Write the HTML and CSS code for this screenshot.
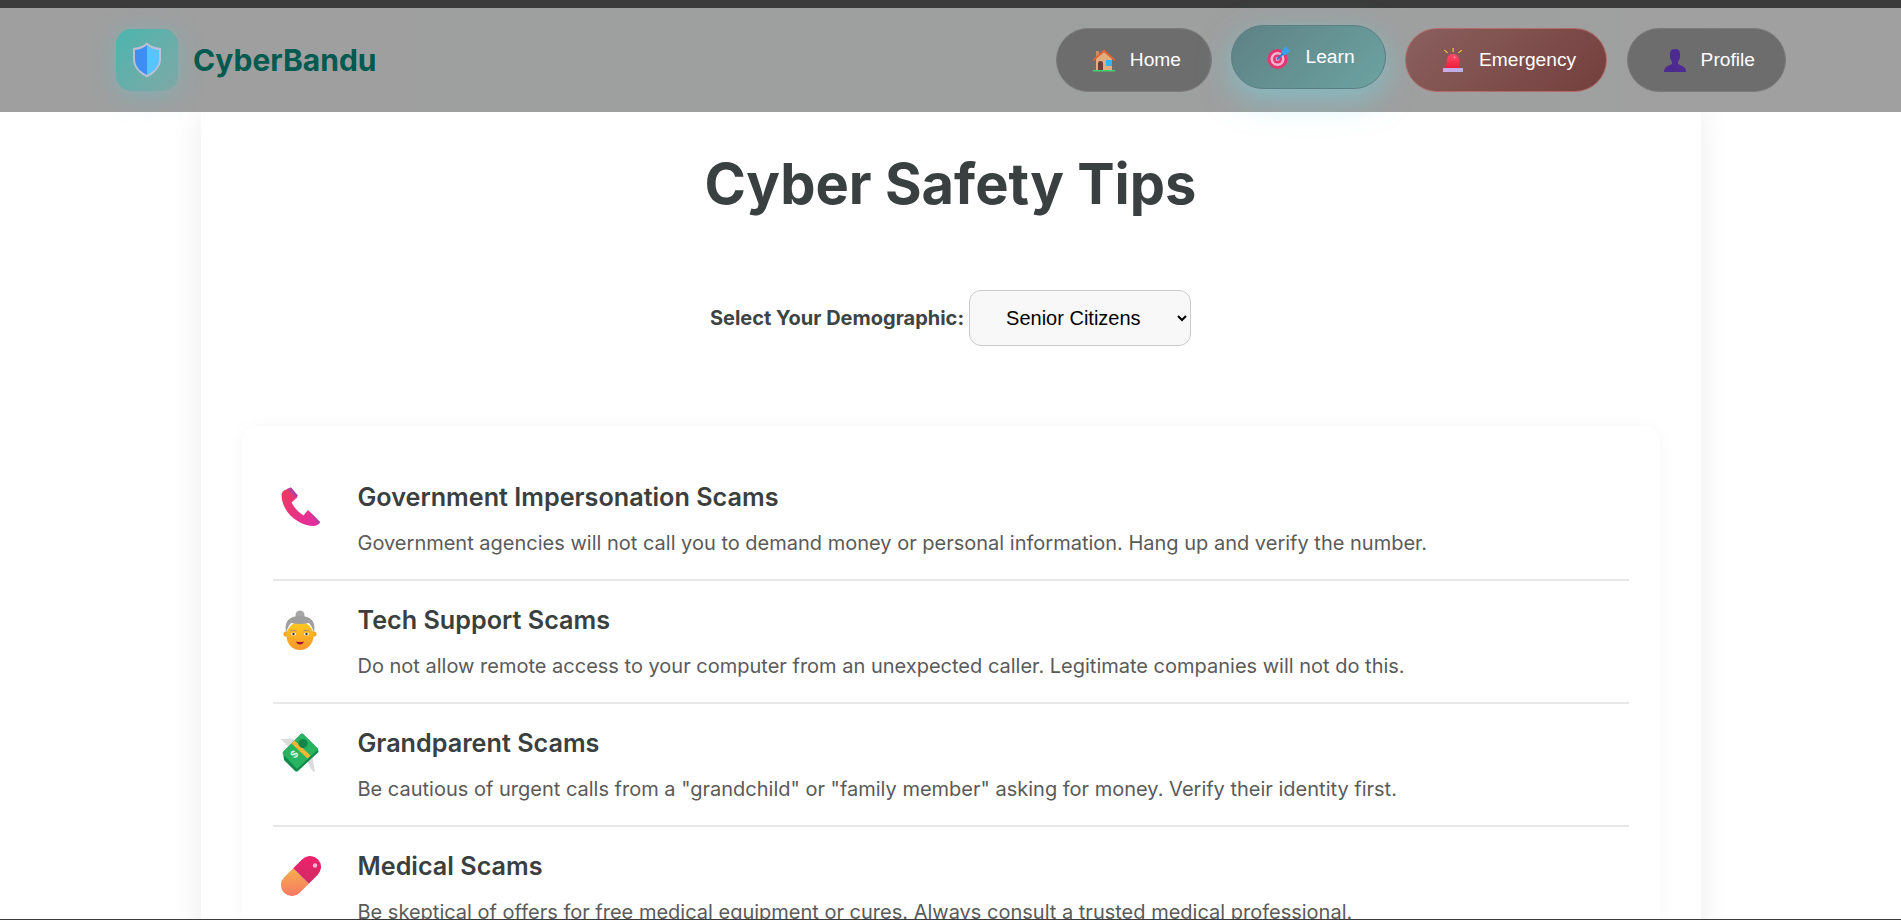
FILE: index.html
```html
<!DOCTYPE html>
<html lang="en">
<head>
<meta charset="utf-8">
<title>CyberBandu</title>
<link rel="stylesheet" href="styles.css">
</head>
<body>
<div class="topbar"></div>
<nav class="nav">
  <a class="brand">
    <span class="logo">
      <svg class="shield" viewBox="0 0 30 36"><path d="M15 .5l4 3q5 2 10 2.500V17c0 9-7.500 15-14 18.500C8.500 32 1 26 1 17V6q5-.5 10-2.500z" fill="#bcc0d6"/><path d="M15 3v30C9 30 3 25 3 17V8q7-.5 12-5z" fill="#3d8df3"/><path d="M15 3v30c6-3 12-8 12-16V8q-7-.5-12-5z" fill="#55c4ff"/></svg>
    </span>
    <span class="brand-name">CyberBandu</span>
  </a>
  <div class="links">
    <a class="link">
      <svg class="nav-icon" viewBox="0 0 24 24"><path d="M4 3h3v7H4z" fill="#c98d63"/><path d="M4 11L12 4l8 7v11H4z" fill="#e3ae7d"/><path d="M.5 12L12 1.500 23.500 12l-1 1L12 4 1.500 13z" fill="#f2602e"/><path d="M6 22v-7q0-2 2.500-2t2.500 2v7z" fill="#6e3f3c"/><path d="M14 12h6v6h-6z" fill="#35b4f4"/><path d="M1 22h22v1.500H1z" fill="#3fd56a"/></svg>
      <span>Home</span>
    </a>
    <a class="link link-active">
      <svg class="nav-icon" viewBox="0 0 24 24"><circle cx="10.500" cy="14" r="10" fill="#e2376f"/><circle cx="10.500" cy="14" r="7" fill="#f3b3d2"/><circle cx="10.500" cy="14" r="4.500" fill="#e2376f"/><circle cx="10.500" cy="14" r="2" fill="#f3b3d2"/><path d="M10 14.500l8-8" stroke="#1f7fd6" stroke-width="2"/><path d="M14 7l5-6 1.500 3 3.500 1-6 5.500z" fill="#3aa0f0"/></svg>
      <span>Learn</span>
    </a>
    <a class="link link-danger">
      <svg class="nav-icon" viewBox="0 0 20 24"><defs><linearGradient id="sr" x1="0" y1="0" x2="0" y2="1"><stop offset="0" stop-color="#ff4a6a"/><stop offset="1" stop-color="#ee1f3c"/></linearGradient></defs><path d="M3 20l1-9q1-5 6-5t6 5l1 9z" fill="url(#sr)"/><circle cx="11.500" cy="9.500" r="1" fill="#ffa0ae"/><path d="M0 20h20v4H0z" fill="#c6ade6"/><path d="M9.500 0h1.200v4H9.500zM1 2.500l.8-.8L5 4.500l-.8.8zM19.200 2.500l-.8-.8L15 4.500l.8.8z" fill="#f3c43c"/></svg>
      <span>Emergency</span>
    </a>
    <a class="link">
      <svg class="nav-icon" viewBox="0 0 24 24"><path d="M7 6q0-5 5-5t5 5v3q0 1-.5 2t-1.500 3v2q5 2 7 4 1 2 1 4H1q0-2 1-4 2-2 7-4v-2q-1-2-1.500-3T7 9z" fill="#4c2a8f"/></svg>
      <span>Profile</span>
    </a>
  </div>
</nav>
<main class="main">
  <div class="container">
    <h1 class="title">Cyber Safety Tips</h1>
    <div class="picker">
      <label class="picker-label" for="demo">Select Your Demographic:</label>
      <select class="picker-select" id="demo">
        <option>Senior Citizens</option>
      </select>
    </div>
    <section class="card">
      <article class="tip">
        <svg class="tip-icon" viewBox="0 0 40 40"><defs><linearGradient id="ph" x1="0" y1="0" x2="1" y2="1"><stop offset="0" stop-color="#ee3a5a"/><stop offset="1" stop-color="#e22ca8"/></linearGradient></defs><path d="M6 2l4-1.500L16.500 10l-6 5.500Q14 23 22.500 28.500L27 23l12 12q-1 3-6 4C18 39 1 26 .5 8Q.5 4 6 2z" fill="url(#ph)"/><path d="M6.500 2L10 .5l7 8-2 2.500zM28.500 24.500L27 23l12 12-1.500 2.500z" fill="#b340a0"/></svg>
        <div class="tip-body">
          <h3 class="tip-title">Government Impersonation Scams</h3>
          <p class="tip-text">Government agencies will not call you to demand money or personal information. Hang up and verify the number.</p>
        </div>
      </article>
      <article class="tip">
        <svg class="tip-icon" viewBox="0 0 40 40"><defs><linearGradient id="fc" x1="0" y1="0" x2="0" y2="1"><stop offset="0" stop-color="#ffcb1f"/><stop offset="1" stop-color="#f7962c"/></linearGradient></defs><circle cx="5" cy="24" r="2.600" fill="#f7a823"/><circle cx="33" cy="24" r="2.600" fill="#f7a823"/><ellipse cx="19" cy="26" rx="13.500" ry="14" fill="url(#fc)"/><circle cx="19" cy="5" r="4.500" fill="#a6a6a6"/><path d="M5 23Q2 6 19 6t14 17q-2-7-5-10-9 2-18 0-3 3-5 10z" fill="#9f9f9f"/><ellipse cx="12.500" cy="24" rx="2.600" ry="1.500" fill="#fff"/><ellipse cx="25.500" cy="24" rx="2.600" ry="1.500" fill="#fff"/><circle cx="12.500" cy="24" r="1.200" fill="#4a3020"/><circle cx="25.500" cy="24" r="1.200" fill="#4a3020"/><path d="M9.500 21q3-1.500 6 0M22.500 21q3-1.500 6 0" stroke="#b08a66" fill="none"/><path d="M15 31.500q4 1 8 0-1 3-4 3t-4-3z" fill="#a3123f"/></svg>
        <div class="tip-body">
          <h3 class="tip-title">Tech Support Scams</h3>
          <p class="tip-text">Do not allow remote access to your computer from an unexpected caller. Legitimate companies will not do this.</p>
        </div>
      </article>
      <article class="tip">
        <svg class="tip-icon" viewBox="0 0 40 40"><path d="M0 6l11-.5 4 4-7 5zM24 25l7-5 3 19q-2 0-3.500-2.500z" fill="#dcdcdc"/><path d="M2 19L20 1q1-1 2 0l15 15 .5 3L17 38q-1.500 1-3 0L3 27z" fill="#0f8a4c"/><path d="M2 19L20 1q1-1 2 0l14.500 14q1 1 0 2L17 35q-1 1-2 0L2 21q-1-1 0-2z" fill="#27b35f"/><path d="M10.500 10.500l3-3 16 15-3 3z" fill="#f7b733"/><circle cx="22" cy="10.500" r="4.500" fill="#15854c"/><text class="bill-mark" x="10" y="25" transform="rotate(-45 13 21)">$</text></svg>
        <div class="tip-body">
          <h3 class="tip-title">Grandparent Scams</h3>
          <p class="tip-text">Be cautious of urgent calls from a "grandchild" or "family member" asking for money. Verify their identity first.</p>
        </div>
      </article>
      <article class="tip">
        <svg class="tip-icon" viewBox="0 0 40 40"><defs><linearGradient id="pa" x1="1" y1="0" x2="0" y2="1"><stop offset="0" stop-color="#f2b04a"/><stop offset="1" stop-color="#fc6f6a"/></linearGradient><linearGradient id="pb" x1="0" y1="1" x2="1" y2="0"><stop offset="0" stop-color="#cf2a62"/><stop offset="1" stop-color="#f4206e"/></linearGradient></defs><g transform="rotate(-45 20 20)"><path d="M20 9H7.250a11 11 0 0 0 0 22H20z" fill="url(#pa)"/><path d="M20 9h12.750a11 11 0 0 1 0 22H20z" fill="url(#pb)"/></g><circle cx="34" cy="9.500" r="2.200" fill="#f9b6d0"/></svg>
        <div class="tip-body">
          <h3 class="tip-title">Medical Scams</h3>
          <p class="tip-text">Be skeptical of offers for free medical equipment or cures. Always consult a trusted medical professional.</p>
        </div>
      </article>
    </section>
  </div>
</main>
<div class="bottombar"></div>
</body>
</html>
```

FILE: styles.css
```css
* { box-sizing: border-box; }

html, body {
  margin: 0;
  height: 920px;
  overflow: hidden;
  background: #fff;
}

body {
  display: flex;
  flex-direction: column;
  font-family: "Inter", "Liberation Sans", sans-serif;
}

.topbar {
  height: 8px;
  flex: none;
  background: #3b3b3b;
}

.bottombar {
  height: 1px;
  flex: none;
  background: #3b3b3b;
  position: relative;
  z-index: 3;
}

.nav {
  height: 104px;
  flex: none;
  display: flex;
  align-items: center;
  justify-content: space-between;
  padding: 0 115px 0 116px;
  background: linear-gradient(90deg, #9f9f9f, #9e9f9f 60%, #a0a0a0);
  position: relative;
  z-index: 2;
}

.brand {
  display: flex;
  align-items: center;
  gap: 15px;
}

.logo {
  width: 62px;
  height: 62px;
  border-radius: 15px;
  display: flex;
  align-items: center;
  justify-content: center;
  background: linear-gradient(135deg, #4cb5ae, #80a8a6);
  box-shadow: 0 4px 26px rgba(90, 200, 215, 0.42);
}

.shield {
  width: 30px;
  height: 36px;
}

.brand-name {
  font-size: 30px;
  font-weight: 700;
  color: #005a50;
}

.links {
  display: flex;
  align-items: center;
  gap: 19.5px;
}

.link {
  height: 64px;
  display: flex;
  align-items: center;
  gap: 14px;
  padding: 0 30px 0 35px;
  border: 1px solid #7b7b7b;
  border-radius: 32px;
  background: #6d6d6d;
  color: #fff;
  font-family: "Liberation Sans", Arial, sans-serif;
  font-size: 19.2px;
}

.link-active {
  margin-top: -6px;
  border-color: #5b8084;
  background: linear-gradient(135deg, #5e8184, #6ca3a2);
  box-shadow: 0 10px 32px rgba(105, 220, 235, 0.5);
}

.link-danger {
  border-color: #b46a6a;
  background: linear-gradient(135deg, #8a605e, #743f3d);
}

.nav-icon {
  width: 24px;
  height: 24px;
  flex: none;
}

.main {
  flex: 1;
  min-height: 0;
  overflow: hidden;
}

.container {
  width: 1500px;
  height: 900px;
  margin: 0 auto;
  padding: 38px 41px 0;
  background: #fff;
  box-shadow: 0 0 30px rgba(0, 0, 0, 0.08);
}

.title {
  margin: 0;
  text-align: center;
  font-size: 56px;
  line-height: 68px;
  font-weight: 700;
  color: #3a4040;
}

.picker {
  display: flex;
  align-items: center;
  justify-content: center;
  gap: 5px;
  margin-top: 72px;
}

.picker-label {
  font-size: 20px;
  font-weight: 700;
  color: #3d4444;
}

.picker-select {
  width: 222px;
  height: 56px;
  padding: 0 32px;
  border: 1px solid #cbcbcb;
  border-radius: 12px;
  background: #f8f8f8;
  color: #000;
  font-family: "Liberation Sans", Arial, sans-serif;
  font-size: 20px;
}

.card {
  margin-top: 80px;
  padding: 32px 31px 0;
  border-radius: 16px;
  background: #fff;
  box-shadow: 0 0 20px rgba(0, 0, 0, 0.03);
}

.tip {
  display: flex;
  gap: 37px;
  height: 123px;
  padding: 24px 0 0 8px;
  border-bottom: 2px solid #e8e8e8;
}

.tip-icon {
  width: 40px;
  height: 40px;
  flex: none;
  margin-top: 5px;
}

.bill-mark {
  font-family: "Liberation Sans", sans-serif;
  font-size: 11px;
  font-weight: 700;
  fill: #d8f5e0;
}

.tip-title {
  margin: 0;
  font-size: 25.2px;
  line-height: 30px;
  font-weight: 600;
  color: #3a4040;
}

.tip-text {
  margin: 15px 0 0;
  font-size: 20px;
  line-height: 32px;
  color: #5a5a5a;
}
```
